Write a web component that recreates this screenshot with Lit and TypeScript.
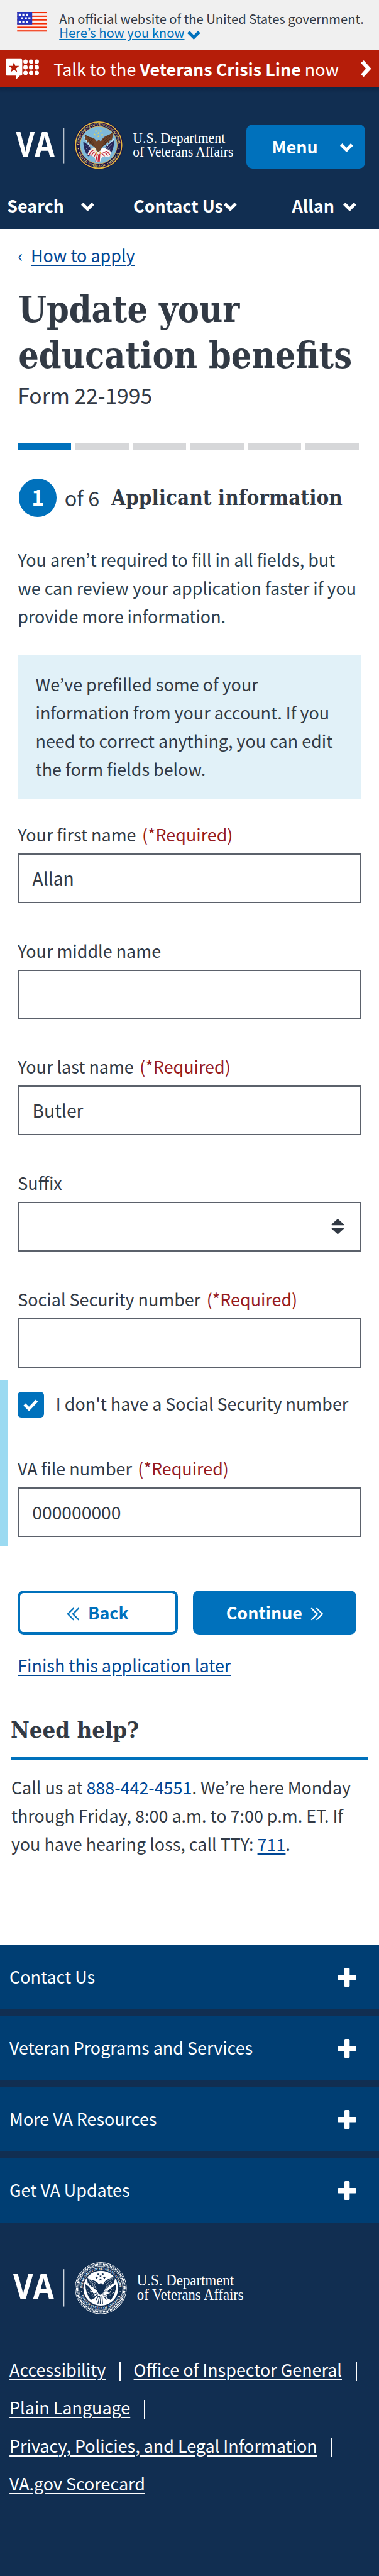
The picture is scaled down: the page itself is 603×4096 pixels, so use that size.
import { LitElement, html, css, svg, nothing } from "lit";

const SANS = css`"Noto Sans CJK JP", "Noto Sans", sans-serif`;
const SLAB = css`"DejaVu Serif Condensed", "DejaVu Serif", serif`;

class VaChevron extends LitElement {
  static styles = css`
    :host { display: inline-block; width: 22px; height: 15px; flex: none; }
    svg { display: block; width: 100%; height: 100%; overflow: visible; }
  `;
  render() {
    return html`<svg viewBox="0 0 22 15" fill="none" stroke="currentColor" stroke-width="5.4">
      <path d="M1.9 2 11 11.1 20.1 2" stroke-linejoin="miter" />
    </svg>`;
  }
}
customElements.define("va-chevron", VaChevron);

const star = (x: number, y: number, r: number, fill: string) => {
  const pts: string[] = [];
  for (let i = 0; i < 10; i++) {
    const a = -Math.PI / 2 + (i * Math.PI) / 5;
    const q = i % 2 ? r * 0.4 : r;
    pts.push(`${(x + q * Math.cos(a)).toFixed(2)},${(y + q * Math.sin(a)).toFixed(2)}`);
  }
  return svg`<polygon points=${pts.join(" ")} fill=${fill} />`;
};

const starCluster = (fill: string, r: number) =>
  [[-4.5, -23.5], [3.5, -23.5], [-7, -17.5], [6, -17.5], [-0.5, -14.5], [-0.5, -20]].map(([x, y]) => star(x, y, r, fill));

const WINGS =
  "M-23.5-20 Q-21-14-13-13 Q-7-12-3-6 L0-9 L4-6 Q6-13 14-16 Q21-18 23.5-22 Q25-14 21-7 L19-8 L17-3 L15-5 L12-1 Q8 0 6 4 L3 9 Q-1 13-4 9 L-7 3 Q-11 2-13-2 L-15-1 L-17-5 L-19-4 L-20-9 L-22-8 Z";
const FEATHERS = "M-20-13-9-5M-18-9-8-2M-15-5-7 1M20-15 8-5M19-10 8-2M16-6 6 2M-22-16-8-8M22-19 7-9";

class VaLogo extends LitElement {
  static properties = { mono: { type: Boolean } };
  mono = false;
  static styles = css`
    :host { display: block; flex: none; font-weight: 400; }
    svg { display: block; }
    .va { font-family: "Open Sans", "Noto Sans", sans-serif; font-weight: 700; }
    .dept { font-family: "Liberation Serif", serif; font-weight: 400; }
    .ring { font-family: "Liberation Serif", serif; font-weight: 700; }
  `;
  ringText(r1: number, r2: number, size: number, fill: string) {
    const p = (r: number, deg: number) =>
      `${(r * Math.cos((deg * Math.PI) / 180)).toFixed(2)} ${(r * Math.sin((deg * Math.PI) / 180)).toFixed(2)}`;
    return svg`
      <path id="top" fill="none" d="M${p(r1, 180)} A${r1} ${r1} 0 0 1 ${p(r1, 0)}" />
      <path id="bottom" fill="none" d="M${p(r2, 160)} A${r2} ${r2} 0 0 0 ${p(r2, 20)}" />
      <text class="ring" font-size=${size} fill=${fill}><textPath href="#top" textLength=${r1 * 3.08} lengthAdjust="spacing">DEPARTMENT OF VETERANS AFFAIRS</textPath></text>
      <text class="ring" font-size=${size} fill=${fill}><textPath href="#bottom" textLength=${r2 * 2.4} lengthAdjust="spacing">UNITED STATES OF AMERICA</textPath></text>
      <circle cx=${-(r1 + 2) * 0.985} cy=${(r1 + 2) * 0.18} r=".9" fill=${fill} />
      <circle cx=${(r1 + 2) * 0.985} cy=${(r1 + 2) * 0.18} r=".9" fill=${fill} />`;
  }
  colourSeal() {
    return svg`
      <circle r="41.3" fill="#1b1647" />
      <circle r="39" fill="none" stroke="#e3b93f" stroke-width="1.8" />
      <circle r="31.3" fill="#7fbada" stroke="#d9b65a" stroke-width="1" />
      ${this.ringText(32.9, 36.9, 5.6, "#e9cf7c")}
      ${starCluster("#f2d64b", 2.1)}
      <path d="M-26-6-13 3-9 15-18 19Q-26 8-26-6ZM26-8 12 2 9 13 18 18Q27 6 26-8Z" fill="#262659" />
      <path d="M-22 0-14 7M-21 6-14 12M22-1 14 6M22 5 14 11M-17 2-13 9M18 0 15 9" stroke="#a9b3cf" stroke-width=".9" stroke-dasharray="1.2 2" />
      <path d="M-25-14-12 7M27-12 11 6" stroke="#e9eef2" stroke-width="1" />
      <path d="M-19 17Q-17 6-8 6L-1 12 8 6Q19 6 21 13L18 21Q8 17 5 22L2 29-4 29-7 21Q-13 17-19 17Z" fill="#f4efec" />
      <path d="M-16 17Q-13 9-7 8M-12 18Q-10 12-5 11M-8 20-4 13M19 17Q15 10 9 9M15 18Q12 12 7 13M10 19 5 14M-5 28-2 15M1 28 2 15M-1 28 0 16" fill="none" stroke="#c5283c" stroke-width="1.6" />
      <path d=${WINGS} fill="#6d4227" />
      <path d=${FEATHERS} stroke="#3b2115" stroke-width=".8" fill="none" />
      <path d="M4 7Q8 3 12 6L15 10 11 10Q8 14 4 12Z" fill="#fff" />
      <path d="M-12 6Q-8 2-4 7L-5 12-9 9Z" fill="#f3e6cd" />
      <path d="M-3 11-4 16M2 11 3 15" stroke="#e0b23c" stroke-width="1.6" />`;
  }
  monoSeal() {
    return svg`
      <circle r="43.3" fill="none" stroke="#fff" stroke-width="1" />
      <circle r="40" fill="none" stroke="#fff" stroke-width="3.6" stroke-dasharray="1.5 .9" />
      <circle r="37.2" fill="none" stroke="#fff" stroke-width=".8" />
      <circle r="29.4" fill="#fff" />
      ${this.ringText(31.2, 35.4, 5.6, "#fff")}
      ${starCluster("#112e51", 2.4)}
      <path d="M-26-7-12 4-10 16-17 20Q-26 8-26-7ZM26-7 12 4 10 16 17 20Q26 8 26-7Z" fill="#112e51" />
      <path d="M-23 1-14 8M-22 7-14 13M22 1 14 8M22 7 14 13M-17 2-13 14M18 2 13 13" stroke="#fff" stroke-width="1" stroke-dasharray="1.4 1.6" />
      <path d="M-26-14-11 8M26-14 9 5" stroke="#fff" stroke-width="3" />
      <path d="M-16 17Q-13 9-7 8M-12 18Q-10 12-5 11M-8 20-4 13M17 17Q14 10 9 9M13 18Q12 12 7 13M10 19 5 14M-5 27-2 13M3 27 2 13M-1 27 0 14" fill="none" stroke="#112e51" stroke-width="1.5" />
      <path d=${WINGS} fill="#112e51" />
      <path d=${FEATHERS} stroke="#fff" stroke-width=".6" fill="none" />
      <path d="M4 7Q8 3 12 6L15 9 11 10Q8 13 4 12Z" fill="#fff" stroke="#112e51" stroke-width=".6" />`;
  }
  render() {
    return this.mono
      ? html`<svg width="420" height="95" viewBox="20 3815 420 95">
          <text class="va" font-size="58.5" fill="#fff" transform="translate(22 3880) scale(.88 1)">VA</text>
          <rect x="107" y="3829" width="1.4" height="63" fill="#cfd6de" />
          <g transform="translate(170 3861)">${this.monoSeal()}</g>
          <g class="dept" fill="#fff" font-size="26">
            <text transform="translate(231 3856) scale(.934 1)">U.S. Department</text>
            <text transform="translate(231 3881) scale(.922 1)">of Veterans Affairs</text>
          </g></svg>`
      : html`<svg width="380" height="90" viewBox="20 200 380 90">
          <text class="va" font-size="57.4" fill="#fff" transform="translate(27 265) scale(.845 1)">VA</text>
          <rect x="107" y="216" width="1.4" height="60" fill="#b9c2cd" />
          <g transform="translate(166.4 245.2)">${this.colourSeal()}</g>
          <g class="dept" fill="#fff" font-size="24.6">
            <text transform="translate(224 241) scale(.94 1)">U.S. Department</text>
            <text transform="translate(224 265) scale(.918 1)">of Veterans Affairs</text>
          </g></svg>`;
  }
}
customElements.define("va-logo", VaLogo);

class VaField extends LitElement {
  static properties = {
    label: { type: String },
    value: { type: String },
    required: { type: Boolean },
    select: { type: Boolean },
  };
  label = "";
  value = "";
  required = false;
  select = false;
  static styles = css`
    :host { display: block; height: 133.8px; }
    .label { display: block; line-height: 36px; margin-bottom: 13.8px; white-space: nowrap; }
    .req { color: #981b1e; margin-left: 10px; }
    .box {
      box-sizing: border-box; height: 84px; border: 2.2px solid #5b616b; background: #fff;
      padding: 0 27px 0 22.5px; display: flex; align-items: center; justify-content: space-between;
      font-size: 30px; line-height: 79px; color: #323a45;
    }
    .value { height: 80px; }
    svg { display: block; width: 22px; height: 26px; }
  `;
  render() {
    return html`
      <label class="label">${this.label}${this.required ? html`<span class="req">(*Required)</span>` : nothing}</label>
      <div class="box">
        <span class="value">${this.value}</span>
        ${this.select
          ? html`<svg viewBox="0 0 22 26" fill="#323a45"><path d="M10 .9Q11 .2 12 .9L21 9Q22 11 20 11H2Q0 11 1 9ZM10 25.1Q11 25.8 12 25.1L21 17Q22 15 20 15H2Q0 15 1 17Z" /></svg>`
          : nothing}
      </div>`;
  }
}
customElements.define("va-field", VaField);

const DOTS = [104.5, 114, 123.5].flatMap((y) => [43.5, 53, 62.5].map((x) => [x, y]));
const FLAG_STARS = [[32, 23], [38, 23], [44, 23], [36, 29], [42.3, 29], [48.3, 29], [32, 35], [38, 35], [44, 35]];

class AppRoot extends LitElement {
  static styles = css`
    :host { display: block; overflow: hidden; background: #fff; }
    .page {
      zoom: 0.9424; width: 640px; height: 4347px; display: flex; flex-direction: column;
      font-family: ${SANS}; font-size: 28.57px; line-height: 48px; color: #323a45;
    }
    svg { display: block; flex: none; }
    a { text-decoration: underline; text-decoration-thickness: 2px; text-underline-offset: 4px; color: #004795; }

    .gov { height: 84px; background: #f0f0f0; display: flex; flex: none; font-size: 21.43px; line-height: 24px; box-sizing: border-box; padding: 20px 0 0 29px; }
    .gov-text { margin-left: 20px; white-space: nowrap; }
    .know { display: flex; align-items: center; color: #0071bc; }
    .know a { color: #0071bc; text-underline-offset: 2.5px; }
    .know va-chevron { margin: 7px 0 0 5px; }

    .crisis { height: 64px; flex: none; background: #b51d09; color: #fff; display: flex; align-items: center; line-height: 65px; white-space: nowrap; padding: 0 13px 0 10px; }
    .crisis-text { flex: 1; margin-left: 23.5px; }

    .header { background: linear-gradient(#0d2747, #112e51 10px); color: #fff; height: 238px; flex: none; font-weight: 700; }
    .brand { display: flex; padding: 52px 0 0 20px; }
    .menu { box-sizing: border-box; width: 200px; height: 74px; margin: 10px 0 0 16px; border-radius: 10px; background: #0071bc; display: flex; align-items: center; justify-content: space-between; padding: 0 20px 0 43px; line-height: 74px; }
    .menu va-chevron { margin-top: 5px; }
    .menu span, .nav span { display: block; }
    .menu span { height: 74px; }
    .nav { display: grid; grid-template-columns: 213px 268px 1fr; padding: 26.8px 0 0 12px; line-height: 60px; }
    .item { display: flex; align-items: center; white-space: nowrap; }
    .item va-chevron { margin-top: 4px; }
    .search va-chevron { margin-left: 29px; }
    .contact va-chevron { margin-left: 1px; }
    .user va-chevron { margin-left: 15px; }

    .form { padding: 20.7px 30px 0; }
    .crumb { display: flex; }
    .crumb span { width: 22px; color: #004795; }
    h1, h2 { font-family: ${SLAB}; font-weight: 700; margin: 0; white-space: nowrap; }
    h1 { font-size: 60.5px; line-height: 78px; margin: 28.1px 0 0 1px; }
    .sub { font-size: 35.7px; margin-top: 3.7px; }
    .progress { display: flex; gap: 7.2px; width: 576px; height: 12px; margin-top: 57.5px; }
    .progress i { flex: 1; background: #d6d7d9; }
    .progress .done { background: #0071bc; }
    .step { display: flex; margin-top: 48px; height: 64px; line-height: 65px; }
    .num { width: 64px; border-radius: 50%; margin-left: 2px; background: #0071bc; color: #fff; font-weight: 700; font-size: 36px; line-height: 62.5px; text-align: center; }
    .of { font-size: 34.4px; margin-left: 13px; line-height: 64px; }
    .step h2 { font-size: 35px; margin-left: 20px; }
    .intro { margin: 47.9px 0 0; color: #2c3f50; white-space: nowrap; }
    .info { box-sizing: border-box; height: 242px; margin-top: 42.1px; padding: 23.9px 30px 0; background: #e1f1f8; white-space: nowrap; }
    .fields { display: flex; flex-direction: column; gap: 62.2px; margin-top: 42.2px; }

    .expand { border-left: 14px solid #9bdaf1; margin-top: 20px; padding: 20px 30px 16px 16px; height: 246px; flex: none; }
    .check { display: flex; line-height: 40.5px; height: 44px; margin-bottom: 68.2px; white-space: nowrap; }
    .tick { width: 44px; height: 44px; border-radius: 6px; background: #0071bc; margin-right: 20.5px; }

    .actions { display: flex; gap: 26px; padding: 74px 30px 0; font-weight: 700; }
    .btn { box-sizing: border-box; height: 74px; border: 4.3px solid #0071bc; border-radius: 10px; display: flex; align-items: center; justify-content: center; gap: 14px; width: 270px; color: #0071bc; line-height: 65.3px; }
    .btn span { height: 66px; }
    .btn svg { margin-top: 5px; }
    .next { width: 276px; background: #0071bc; color: #fff; }
    .later { padding: 27.9px 30px 0; }

    .help { padding: 60px 18px 147px; }
    .help h2 { font-size: 38.5px; line-height: 50px; padding-bottom: 20.1px; border-bottom: 6px solid #0071bc; }
    .help p { margin: 21.9px 0 0 1px; white-space: nowrap; }
    .plain { text-decoration: none; }

    .footer { background: #112e51; color: #fff; flex: 1; }
    .panels { display: flex; flex-direction: column; gap: 12px; }
    .panel { height: 108px; background: #003e73; display: flex; justify-content: space-between; align-items: center; padding: 0 38px 0 16px; line-height: 106px; }
    .panel span { height: 108px; }
    .footer va-logo { margin: 65px 0 0 20px; }
    .links { display: flex; flex-wrap: wrap; margin-top: 56.6px; padding-left: 16px; line-height: 64px; }
    .links a { color: #fff; }
    .cell { display: flex; align-items: center; white-space: nowrap; }
    .bar { width: 2px; height: 32px; background: #fff; margin: 6px 22px 0 23px; }
  `;

  plus() {
    return html`<svg width="32" height="32" viewBox="0 0 32 32" fill="#fff">
      <rect x="0" y="11.6" width="32" height="9" rx="1.8" /><rect x="11.5" y="0" width="9" height="32" rx="1.8" /></svg>`;
  }

  render() {
    const links = ["Accessibility", "Office of Inspector General", "Plain Language", "Privacy, Policies, and Legal Information", "VA.gov Scorecard"];
    return html`<div class="page">
      <div class="gov">
        <svg width="51" height="34" viewBox="29 20 51 34">
          <rect x="29.3" y="20" width="50" height="33.2" fill="#fbeeec" />
          ${[20, 26.2, 32.4, 38.6, 44.8, 51].map((y) => svg`<rect x="29.3" y=${y} width="50" height="2.2" fill="#f22c05" />`)}
          <rect x="29.3" y="20" width="25.4" height="21" fill="#2535bd" />
          ${FLAG_STARS.map(([x, y]) => svg`<rect x=${x} y=${y} width="3.4" height="3.4" fill="#fff" />`)}
        </svg>
        <div class="gov-text">
          <div>An official website of the United States government.</div>
          <div class="know"><a>Here’s how you know</a><va-chevron></va-chevron></div>
        </div>
      </div>

      <div class="crisis">
        <svg width="57" height="38" viewBox="10 97 57 38">
          <path d="M12 100H36Q38 100 38 102V126Q38 128 36 128H34L27.3 135V128H12Q10 128 10 126V102Q10 100 12 100Z" fill="#fff" />
          ${star(24, 114.6, 9.4, "#b51d09")}
          ${DOTS.map(([x, y]) => svg`<circle cx=${x} cy=${y} r="3.7" fill="#fff" />`)}
        </svg>
        <div class="crisis-text">Talk to the <b>Veterans Crisis Line</b> now</div>
        <svg width="18" height="30" viewBox="0 0 18 30" fill="none" stroke="#fff" stroke-width="6.6"><path d="M2.6 3.2 13.2 15 2.6 26.8" /></svg>
      </div>

      <div class="header">
        <div class="brand">
          <va-logo></va-logo>
          <div class="menu"><span>Menu</span><va-chevron></va-chevron></div>
        </div>
        <div class="nav">
          <div class="item search"><span>Search</span><va-chevron></va-chevron></div>
          <div class="item contact"><span>Contact Us</span><va-chevron></va-chevron></div>
          <div class="item user"><span>Allan</span><va-chevron></va-chevron></div>
        </div>
      </div>

      <div class="form">
        <div class="crumb"><span>‹</span><a>How to apply</a></div>
        <h1>Update your<br />education benefits</h1>
        <div class="sub">Form 22-1995</div>
        <div class="progress"><i class="done"></i><i></i><i></i><i></i><i></i><i></i></div>
        <div class="step"><div class="num">1</div><div class="of">of 6</div><h2>Applicant information</h2></div>
        <p class="intro">You aren’t required to fill in all fields, but<br />we can review your application faster if you<br />provide more information.</p>
        <div class="info">We’ve prefilled some of your<br />information from your account. If you<br />need to correct anything, you can edit<br />the form fields below.</div>
        <div class="fields">
          <va-field label="Your first name" value="Allan" required></va-field>
          <va-field label="Your middle name"></va-field>
          <va-field label="Your last name" value="Butler" required></va-field>
          <va-field label="Suffix" select></va-field>
          <va-field label="Social Security number" required></va-field>
        </div>
      </div>

      <div class="expand">
        <div class="check">
          <svg class="tick" viewBox="0 0 44 44"><path d="M11.6 21.5 19.2 29 32.5 15" fill="none" stroke="#fff" stroke-width="5.2" /></svg>
          <span>I don't have a Social Security number</span>
        </div>
        <va-field label="VA file number" value="000000000" required></va-field>
      </div>

      <div class="actions">
        <div class="btn"><svg width="22" height="22" viewBox="0 0 22 22" fill="none" stroke="currentColor" stroke-width="2.4"><path d="M12 1 2 11 12 21M20.6 1 10.6 11 20.6 21" /></svg><span>Back</span></div>
        <div class="btn next"><span>Continue</span><svg width="22" height="22" viewBox="0 0 22 22" fill="none" stroke="currentColor" stroke-width="2.4"><path d="M10 1 20 11 10 21M1.4 1 11.4 11 1.4 21" /></svg></div>
      </div>
      <div class="later"><a>Finish this application later</a></div>

      <div class="help">
        <h2>Need help?</h2>
        <p>Call us at <a class="plain">888-442-4551</a>. We’re here Monday<br />through Friday, 8:00 a.m. to 7:00 p.m. ET. If<br />you have hearing loss, call TTY: <a>711</a>.</p>
      </div>

      <div class="footer">
        <div class="panels">
          ${["Contact Us", "Veteran Programs and Services", "More VA Resources", "Get VA Updates"].map(
            (t) => html`<div class="panel"><span>${t}</span>${this.plus()}</div>`
          )}
        </div>
        <va-logo mono></va-logo>
        <div class="links">
          ${links.map((t, i) => html`<div class="cell"><a>${t}</a>${i < links.length - 1 ? html`<i class="bar"></i>` : nothing}</div>`)}
        </div>
      </div>
    </div>`;
  }
}
customElements.define("app-root", AppRoot);
